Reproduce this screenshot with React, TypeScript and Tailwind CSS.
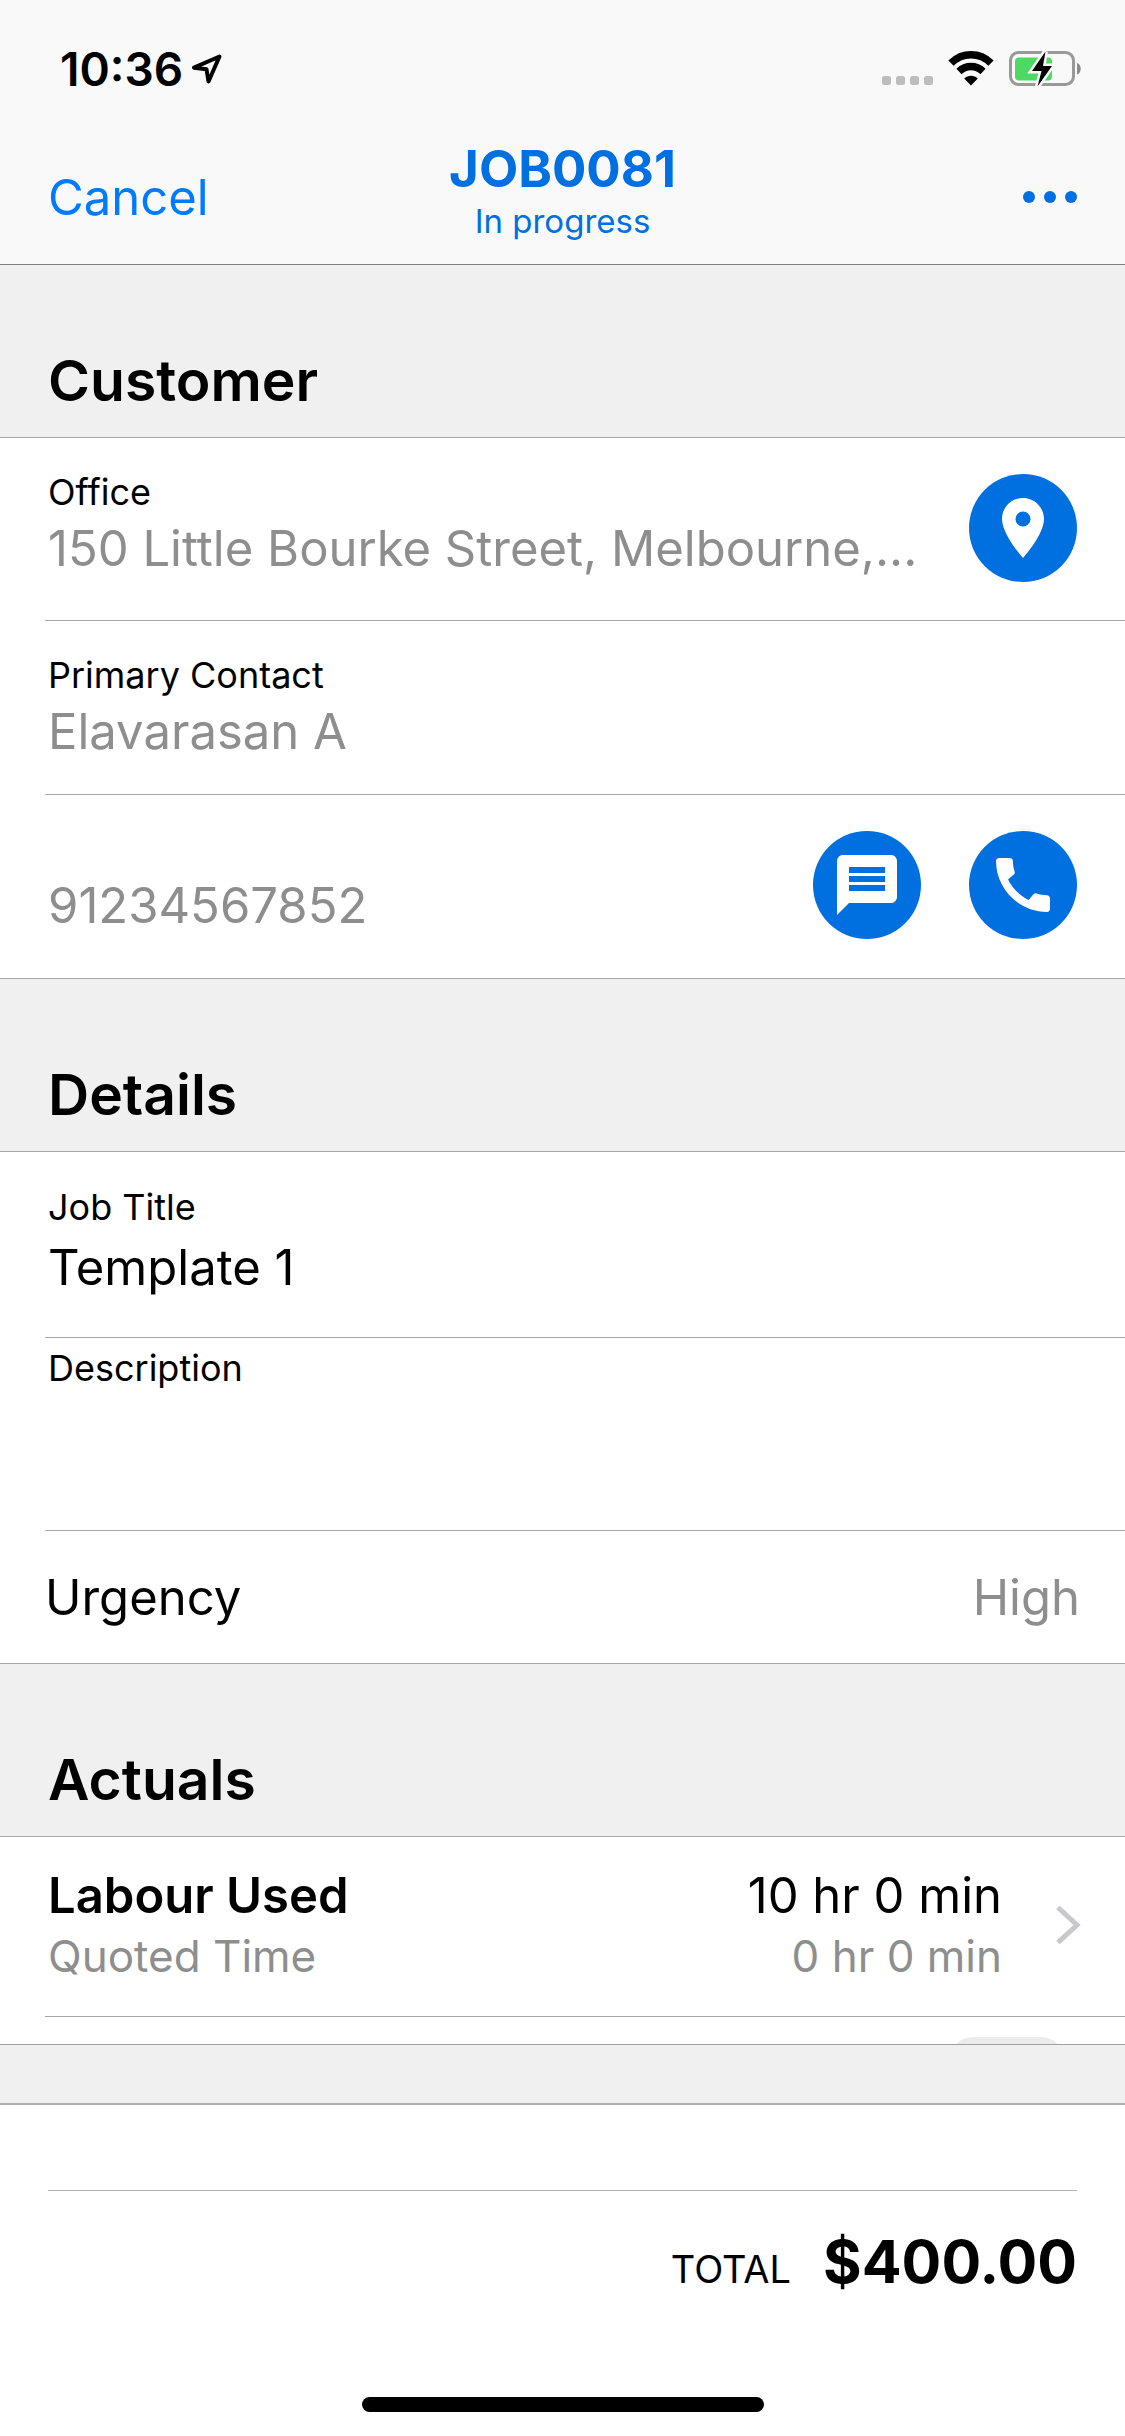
import React, { useId, useState } from "react";
import { MdCall, MdLocationOn, MdMessage } from "react-icons/md";

function LocationArrow() {
  return (
    <svg viewBox="0 0 32 32" className="size-8" fill="none" stroke="#000" strokeWidth="4" strokeLinejoin="round" aria-hidden="true">
      <path d="M28.500 3.500 3 14.700 15.500 16.200 17.500 28.500Z" />
    </svg>
  );
}

function StatusIcons() {
  return (
    <div className="flex items-start">
      <svg viewBox="0 0 52 10" className="mt-[26px] h-[10px] w-[52px]" fill="#bdbdbd" aria-hidden="true">
        <rect x="0" y="0" width="9" height="9" rx="2.500" />
        <rect x="14" y="0" width="9" height="9" rx="2.500" />
        <rect x="28" y="0" width="9" height="9" rx="2.500" />
        <rect x="42" y="0" width="9" height="9" rx="2.500" />
      </svg>
      <svg viewBox="0 0 46 36" className="ml-[14px] h-9 w-[46px]" aria-hidden="true">
        <g fill="none" stroke="#000" strokeWidth="7.500">
          <path d="M3 13.200C14.300 2 31.700 2 43 13.200" />
          <path d="M11 21.500c6.900-6.600 17.100-6.600 24 0" />
        </g>
        <path d="M23 35.500 16.200 28.600c3.800-3.700 9.800-3.700 13.600 0Z" fill="#000" />
      </svg>
      <svg viewBox="0 0 76 38" className="ml-[14px] h-[38px] w-[76px]" aria-hidden="true">
        <rect x="2.500" y="2.500" width="63" height="32" rx="8" fill="none" stroke="#999" strokeWidth="3" />
        <path d="M69 13c5 1.500 5 10 0 11.500Z" fill="#8a8a8a" />
        <rect x="7" y="7.500" width="37" height="23" rx="4" fill="#4cd964" />
        <path d="M37.500 1.500 24 21h9.500L29.500 36.500 44 16H35Z" fill="#000" stroke="#fafafa" strokeWidth="5" paintOrder="stroke" />
      </svg>
    </div>
  );
}

function SectionHeader({ children }: { children: React.ReactNode }) {
  return (
    <h2 className="border-b border-[#a8a8a8] bg-[#f0f0f0] px-12 pt-20 pb-5 text-[57px] leading-[72px] font-semibold">
      {children}
    </h2>
  );
}

function Rows({ children }: { children: React.ReactNode }) {
  return (
    <div className="divide-y divide-[#a8a8a8] border-b border-[#a8a8a8] bg-white pl-[45px]">{children}</div>
  );
}

function Field({ label, value }: { label?: string; value: string }) {
  return (
    <div className="min-w-0 flex-1 pt-8">
      <p className="min-h-11 text-[36px] leading-[44px]">{label}</p>
      <p className="mt-1 text-[49px] leading-[62px] whitespace-nowrap text-[#8e8e8e]">{value}</p>
    </div>
  );
}

function RoundButton({ label, children }: { label: string; children: React.ReactNode }) {
  return (
    <button
      type="button"
      aria-label={label}
      className="mt-9 flex size-[108px] shrink-0 items-center justify-center rounded-full bg-[#0070e0] text-[72px] text-white"
    >
      {children}
    </button>
  );
}

export default function App() {
  const [title, setTitle] = useState("Template 1");
  const [description, setDescription] = useState("");
  const titleId = useId();
  const descriptionId = useId();

  return (
    <div className="flex h-screen flex-col overflow-hidden bg-[#f0f0f0] font-['Inter',sans-serif] text-black">
      <header className="border-b border-[#808080] bg-[#f9f9f9]">
        <div className="flex h-[132px] items-start justify-between pr-[41px] pl-[60px]">
          <div className="mt-[41px] flex items-center gap-2">
            <span className="text-[46px] leading-[56px] font-semibold">10:36</span>
            <LocationArrow />
          </div>
          <div className="mt-[50px]">
            <StatusIcons />
          </div>
        </div>
        <nav className="grid h-[132px] grid-cols-[1fr_auto_1fr] items-center px-12">
          <button type="button" className="justify-self-start text-[49px] leading-[60px] text-[#007aff]">
            Cancel
          </button>
          <div className="pb-4 text-center text-[#0070e0]">
            <h1 className="text-[51px] leading-[60px] font-bold">JOB0081</h1>
            <p className="mt-[2px] text-[33px] leading-[40px]">In progress</p>
          </div>
          <button type="button" aria-label="More actions" className="flex gap-[9px] justify-self-end pb-[2px] text-[#0070e0]">
            <span className="size-[12px] rounded-full bg-current" />
            <span className="size-[12px] rounded-full bg-current" />
            <span className="size-[12px] rounded-full bg-current" />
          </button>
        </nav>
      </header>

      <main className="min-h-0 flex-1 overflow-y-auto [scrollbar-width:none]">
        <section>
          <SectionHeader>Customer</SectionHeader>
          <Rows>
            <div className="flex gap-10 pr-12 pb-[38px] pl-[3px]">
              <Field label="Office" value="150 Little Bourke Street, Melbourne,..." />
              <RoundButton label="Show on map">
                <MdLocationOn />
              </RoundButton>
            </div>
            <div className="flex pr-12 pb-[31px] pl-[3px]">
              <Field label="Primary Contact" value="Elavarasan A" />
            </div>
            <div className="flex gap-12 pr-12 pb-[39px] pl-[3px]">
              <Field value="91234567852" />
              <RoundButton label="Send message">
                <MdMessage />
              </RoundButton>
              <RoundButton label="Call">
                <MdCall />
              </RoundButton>
            </div>
          </Rows>
        </section>

        <section>
          <SectionHeader>Details</SectionHeader>
          <Rows>
            <div className="flex flex-col pt-[33px] pr-12 pb-[38px] pl-[3px]">
              <label htmlFor={titleId} className="text-[36px] leading-[44px]">
                Job Title
              </label>
              <input
                id={titleId}
                type="text"
                value={title}
                onChange={(e) => setTitle(e.target.value)}
                className="mt-2 h-[62px] w-full text-[49px] leading-[62px] outline-none"
              />
            </div>
            <div className="flex flex-col pt-2 pr-12 pb-5 pl-[3px]">
              <label htmlFor={descriptionId} className="text-[36px] leading-[44px]">
                Description
              </label>
              <textarea
                id={descriptionId}
                value={description}
                onChange={(e) => setDescription(e.target.value)}
                className="h-[120px] w-full resize-none text-[49px] leading-[60px] outline-none"
              />
            </div>
            <button type="button" className="flex w-full justify-between pt-9 pr-[45px] pb-[34px] text-[49px] leading-[62px]">
              <span>Urgency</span>
              <span className="text-[#8e8e8e]">High</span>
            </button>
          </Rows>
        </section>

        <section>
          <SectionHeader>Actuals</SectionHeader>
          <Rows>
            <button type="button" className="flex w-full items-center pt-7 pr-11 pb-[31px] pl-[3px] text-left">
              <span className="flex-1">
                <span className="block text-[49px] leading-[62px] font-semibold">Labour Used</span>
                <span className="block text-[44px] leading-[58px] text-[#8e8e8e]">Quoted Time</span>
              </span>
              <span className="text-right">
                <span className="block text-[49px] leading-[62px]">10 hr 0 min</span>
                <span className="block text-[44px] leading-[58px] text-[#8e8e8e]">0 hr 0 min</span>
              </span>
              <svg viewBox="0 0 26 40" className="ml-[53px] h-10 w-[26px]" fill="none" stroke="#c7c7cc" strokeWidth="5" aria-hidden="true">
                <path d="M3 2.500 22 20 3 37.500" />
              </svg>
            </button>
            <div className="flex justify-end pt-5 pr-[60px]">
              <div className="h-24 w-[116px] rounded-[24px] bg-[#ececec]" />
            </div>
          </Rows>
        </section>
      </main>

      <footer>
        <div className="h-[61px] border-t border-b-2 border-t-[#a0a0a0] border-b-[#b0b0b0] bg-[#f0f0f0]" />
        <div className="bg-white px-12 pt-[85px] pb-6">
          <div className="flex items-baseline justify-end gap-8 border-t border-[#b4b4b4] pt-[35px]">
            <span className="text-[38px] leading-[48px]">TOTAL</span>
            <span className="text-[59px] leading-[72px] font-bold">$400.00</span>
          </div>
          <div className="mx-auto mt-[99px] h-[15px] w-[402px] rounded-full bg-black" />
        </div>
      </footer>
    </div>
  );
}
